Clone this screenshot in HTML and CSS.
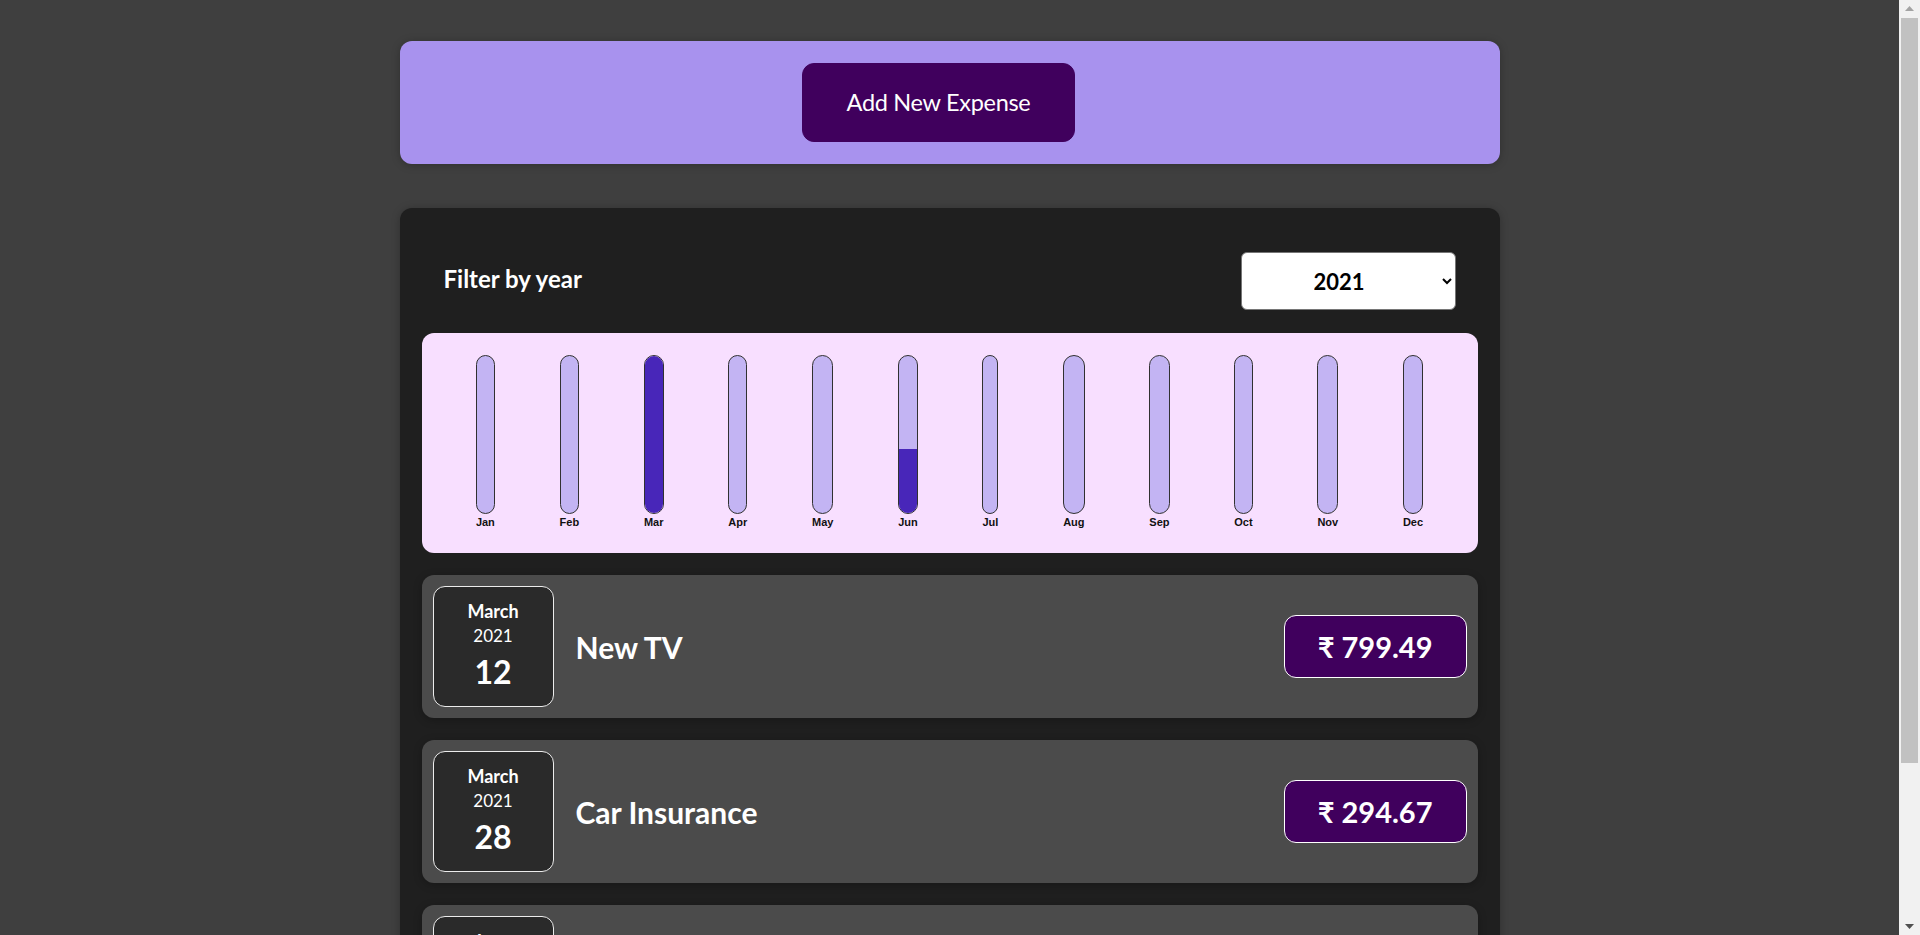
FILE: index.html
```html
<!DOCTYPE html>
<html lang="en">
<head>
<meta charset="utf-8">
<title>Expense Tracker</title>
<link rel="stylesheet" href="styles.css">
</head>
<body>
<div class="new-expense">
  <button class="new-expense__btn" type="button">Add New Expense</button>
</div>

<div class="expenses">
  <div class="expenses-filter">
    <div class="expenses-filter__control">
      <label class="expenses-filter__label">Filter by year</label>
      <select class="expenses-filter__select">
        <option>2022</option>
        <option selected>2021</option>
        <option>2020</option>
        <option>2019</option>
      </select>
    </div>
  </div>

  <div class="chart">
    <div class="chart-bar"><div class="chart-bar__inner"><div class="chart-bar__fill" style="height:0%"></div></div><div class="chart-bar__label">Jan</div></div>
    <div class="chart-bar"><div class="chart-bar__inner"><div class="chart-bar__fill" style="height:0%"></div></div><div class="chart-bar__label">Feb</div></div>
    <div class="chart-bar"><div class="chart-bar__inner"><div class="chart-bar__fill" style="height:100%"></div></div><div class="chart-bar__label">Mar</div></div>
    <div class="chart-bar"><div class="chart-bar__inner"><div class="chart-bar__fill" style="height:0%"></div></div><div class="chart-bar__label">Apr</div></div>
    <div class="chart-bar"><div class="chart-bar__inner"><div class="chart-bar__fill" style="height:0%"></div></div><div class="chart-bar__label">May</div></div>
    <div class="chart-bar"><div class="chart-bar__inner"><div class="chart-bar__fill" style="height:41%"></div></div><div class="chart-bar__label">Jun</div></div>
    <div class="chart-bar"><div class="chart-bar__inner"><div class="chart-bar__fill" style="height:0%"></div></div><div class="chart-bar__label">Jul</div></div>
    <div class="chart-bar"><div class="chart-bar__inner"><div class="chart-bar__fill" style="height:0%"></div></div><div class="chart-bar__label">Aug</div></div>
    <div class="chart-bar"><div class="chart-bar__inner"><div class="chart-bar__fill" style="height:0%"></div></div><div class="chart-bar__label">Sep</div></div>
    <div class="chart-bar"><div class="chart-bar__inner"><div class="chart-bar__fill" style="height:0%"></div></div><div class="chart-bar__label">Oct</div></div>
    <div class="chart-bar"><div class="chart-bar__inner"><div class="chart-bar__fill" style="height:0%"></div></div><div class="chart-bar__label">Nov</div></div>
    <div class="chart-bar"><div class="chart-bar__inner"><div class="chart-bar__fill" style="height:0%"></div></div><div class="chart-bar__label">Dec</div></div>
  </div>

  <ul class="expenses-list">
    <li class="expense-item">
      <div class="expense-date">
        <div class="expense-date__month">March</div>
        <div class="expense-date__year">2021</div>
        <div class="expense-date__day">12</div>
      </div>
      <div class="expense-item__description">
        <h2 class="expense-item__title">New TV</h2>
        <div class="expense-item__price">₹ 799.49</div>
      </div>
    </li>
    <li class="expense-item">
      <div class="expense-date">
        <div class="expense-date__month">March</div>
        <div class="expense-date__year">2021</div>
        <div class="expense-date__day">28</div>
      </div>
      <div class="expense-item__description">
        <h2 class="expense-item__title">Car Insurance</h2>
        <div class="expense-item__price">₹ 294.67</div>
      </div>
    </li>
    <li class="expense-item">
      <div class="expense-date">
        <div class="expense-date__month">June</div>
        <div class="expense-date__year">2021</div>
        <div class="expense-date__day">12</div>
      </div>
      <div class="expense-item__description">
        <h2 class="expense-item__title">New Desk (Wooden)</h2>
        <div class="expense-item__price">₹ 450</div>
      </div>
    </li>
  </ul>
</div>

<div class="scrollbar" aria-hidden="true">
  <svg class="scrollbar__arrow scrollbar__arrow--up" width="9" height="5" viewBox="0 0 9 5"><polygon points="0,5 9,5 4.5,0" fill="#a3a3a3"/></svg>
  <div class="scrollbar__thumb"></div>
  <svg class="scrollbar__arrow scrollbar__arrow--down" width="9" height="5" viewBox="0 0 9 5"><polygon points="0,0 9,0 4.5,5" fill="#505050"/></svg>
</div>
</body>
</html>
```

FILE: styles.css
```css
* {
  box-sizing: border-box;
}

html {
  font-family: Lato, "Noto Sans", sans-serif;
}

body {
  margin: 0;
  padding: 41px 21px 61px 0;
  background-color: #3f3f3f;
}

.scrollbar {
  position: fixed;
  top: 0;
  right: 0;
  width: 21px;
  height: 100vh;
  background-color: #f1f1f1;
}

.scrollbar__thumb {
  position: absolute;
  top: 18px;
  left: 2px;
  width: 17px;
  height: 745px;
  background-color: #c1c1c1;
}

.scrollbar__arrow {
  position: absolute;
  left: 6px;
  display: block;
}

.scrollbar__arrow--up {
  top: 6px;
}

.scrollbar__arrow--down {
  bottom: 6px;
}

.new-expense {
  width: 1100px;
  margin: 0 auto 44px;
  padding: 22px;
  background-color: #a892ee;
  border-radius: 12px;
  text-align: center;
  box-shadow: 0 1px 8px rgba(0, 0, 0, 0.25);
}

.new-expense__btn {
  font-family: Lato, "Noto Sans", sans-serif;
  font-size: 23.5px;
  letter-spacing: -0.3px;
  font-weight: 400;
  line-height: 33px;
  padding: 22px 44px;
  margin-right: 22px;
  border: 1px solid #40005d;
  background-color: #40005d;
  color: #ffffff;
  border-radius: 12px;
  cursor: pointer;
}

.expenses {
  width: 1100px;
  margin: 0 auto;
  padding: 22px;
  background-color: #1f1f1f;
  border-radius: 12px;
  box-shadow: 0 1px 8px rgba(0, 0, 0, 0.25);
}

.expenses-filter {
  color: #ffffff;
  padding: 0 22px;
}

.expenses-filter__control {
  display: flex;
  align-items: center;
  justify-content: space-between;
  margin: 22px 0 23px;
}

.expenses-filter__label {
  font-size: 24px;
  font-weight: 700;
  line-height: 30px;
  margin-bottom: 4px;
}

.expenses-filter__select {
  width: 215px;
  height: 58px;
  font-family: Lato, "Noto Sans", sans-serif;
  font-size: 22px;
  font-weight: 700;
  padding: 0 20px 0 68px;
  border: 1px solid #767676;
  border-radius: 6px;
  background-color: #ffffff;
  color: #000000;
}

.chart {
  display: flex;
  justify-content: space-around;
  height: 220px;
  padding: 22px;
  background-color: #f8dfff;
  border-radius: 12px;
  text-align: center;
}

.chart-bar {
  height: 100%;
  display: flex;
  flex-direction: column;
  align-items: center;
}

.chart-bar__inner {
  flex: 1;
  width: 100%;
  border: 1px solid #313131;
  border-radius: 12px;
  background-color: #c3b4f3;
  overflow: hidden;
  display: flex;
  flex-direction: column;
  justify-content: flex-end;
}

.chart-bar__fill {
  width: 100%;
  background-color: #4826b9;
}

.chart-bar__label {
  font-family: "Liberation Sans", Arial, sans-serif;
  font-size: 11px;
  font-weight: 700;
  line-height: 17px;
  color: #111111;
}

.expenses-list {
  list-style: none;
  margin: 0;
  padding: 0;
}

.expense-item {
  display: flex;
  align-items: center;
  margin: 22px 0;
  padding: 11px;
  border-radius: 12px;
  background-color: #4b4b4b;
  box-shadow: 0 2px 8px rgba(0, 0, 0, 0.25);
}

.expense-item:last-child {
  margin-bottom: 0;
}

.expense-date {
  flex: none;
  width: 121px;
  height: 121px;
  display: flex;
  flex-direction: column;
  align-items: center;
  justify-content: center;
  border: 1px solid #ececec;
  border-radius: 12px;
  background-color: #2a2a2a;
  color: #ffffff;
}

.expense-date__month {
  font-size: 18px;
  font-weight: 700;
  line-height: 22px;
}

.expense-date__year {
  font-size: 17px;
  font-weight: 400;
  line-height: 27px;
}

.expense-date__day {
  font-size: 32px;
  font-weight: 700;
  line-height: 45px;
}

.expense-item__description {
  flex: 1;
  display: flex;
  align-items: center;
  justify-content: space-between;
}

.expense-item__title {
  flex: 1;
  margin: 0 22px;
  font-size: 30px;
  font-weight: 700;
  color: #ffffff;
}

.expense-item__price {
  font-size: 29px;
  font-weight: 700;
  line-height: 39px;
  color: #ffffff;
  background-color: #40005d;
  border: 1px solid #ffffff;
  padding: 11px 33px;
  border-radius: 12px;
}
```
